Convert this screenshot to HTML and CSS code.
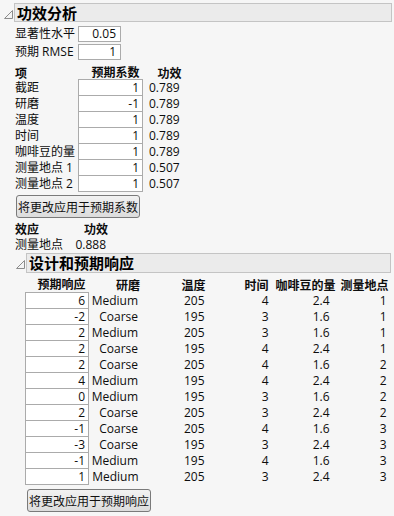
FILE: index.html
```html
<!DOCTYPE html>
<html>
<head>
<meta charset="utf-8">
<link rel="stylesheet" href="styles.css">
</head>
<body>
<div class="outline outline-1">
  <svg class="tri" width="9" height="9" viewBox="0 0 9 9"><polygon points="8.5,0.5 8.5,8.5 0.5,8.5" fill="#f4f4f4" stroke="#8c8c8c" stroke-width="1"/></svg>
  <div class="bar">功效分析</div>
</div>
<div class="sec1">
  <div class="param"><span class="plabel">显著性水平</span><span class="box pbox">0.05</span></div>
  <div class="param"><span class="plabel">预期 RMSE</span><span class="box pbox">1</span></div>

  <table class="t1">
    <tr class="hdr"><th class="c-lab">项</th><th class="c-box">预期系数</th><th class="c-pow">功效</th></tr>
    <tr><td class="c-lab">截距</td><td class="c-box cell">1</td><td class="c-pow">0.789</td></tr>
    <tr><td class="c-lab">研磨</td><td class="c-box cell">-1</td><td class="c-pow">0.789</td></tr>
    <tr><td class="c-lab">温度</td><td class="c-box cell">1</td><td class="c-pow">0.789</td></tr>
    <tr><td class="c-lab">时间</td><td class="c-box cell">1</td><td class="c-pow">0.789</td></tr>
    <tr><td class="c-lab">咖啡豆的量</td><td class="c-box cell">1</td><td class="c-pow">0.789</td></tr>
    <tr><td class="c-lab">测量地点 1</td><td class="c-box cell">1</td><td class="c-pow">0.507</td></tr>
    <tr><td class="c-lab">测量地点 2</td><td class="c-box cell">1</td><td class="c-pow">0.507</td></tr>
  </table>

  <button class="btn btn1">将更改应用于预期系数</button>

  <table class="t-eff">
    <tr class="hdr"><th class="e-lab">效应</th><th class="e-pow">功效</th></tr>
    <tr><td class="e-lab">测量地点</td><td class="e-pow">0.888</td></tr>
  </table>
</div>

<div class="outline outline-2">
  <svg class="tri" width="9" height="9" viewBox="0 0 9 9"><polygon points="8.5,0.5 8.5,8.5 0.5,8.5" fill="#f4f4f4" stroke="#8c8c8c" stroke-width="1"/></svg>
  <div class="bar">设计和预期响应</div>
</div>
<div class="sec2">
  <table class="t2">
    <tr class="hdr"><th class="d1">预期响应</th><th class="d2">研磨</th><th class="d3">温度</th><th class="d4">时间</th><th class="d5">咖啡豆的量</th><th class="d6">测量地点</th></tr>
    <tr><td class="d1 cell">6</td><td class="d2">Medium</td><td class="d3">205</td><td class="d4">4</td><td class="d5">2.4</td><td class="d6">1</td></tr>
    <tr><td class="d1 cell">-2</td><td class="d2">Coarse</td><td class="d3">195</td><td class="d4">3</td><td class="d5">1.6</td><td class="d6">1</td></tr>
    <tr><td class="d1 cell">2</td><td class="d2">Medium</td><td class="d3">205</td><td class="d4">3</td><td class="d5">1.6</td><td class="d6">1</td></tr>
    <tr><td class="d1 cell">2</td><td class="d2">Coarse</td><td class="d3">195</td><td class="d4">4</td><td class="d5">2.4</td><td class="d6">1</td></tr>
    <tr><td class="d1 cell">2</td><td class="d2">Coarse</td><td class="d3">205</td><td class="d4">4</td><td class="d5">1.6</td><td class="d6">2</td></tr>
    <tr><td class="d1 cell">4</td><td class="d2">Medium</td><td class="d3">195</td><td class="d4">4</td><td class="d5">2.4</td><td class="d6">2</td></tr>
    <tr><td class="d1 cell">0</td><td class="d2">Medium</td><td class="d3">195</td><td class="d4">3</td><td class="d5">1.6</td><td class="d6">2</td></tr>
    <tr><td class="d1 cell">2</td><td class="d2">Coarse</td><td class="d3">205</td><td class="d4">3</td><td class="d5">2.4</td><td class="d6">2</td></tr>
    <tr><td class="d1 cell">-1</td><td class="d2">Coarse</td><td class="d3">205</td><td class="d4">4</td><td class="d5">1.6</td><td class="d6">3</td></tr>
    <tr><td class="d1 cell">-3</td><td class="d2">Coarse</td><td class="d3">195</td><td class="d4">3</td><td class="d5">2.4</td><td class="d6">3</td></tr>
    <tr><td class="d1 cell">-1</td><td class="d2">Medium</td><td class="d3">195</td><td class="d4">4</td><td class="d5">1.6</td><td class="d6">3</td></tr>
    <tr><td class="d1 cell">1</td><td class="d2">Medium</td><td class="d3">205</td><td class="d4">3</td><td class="d5">2.4</td><td class="d6">3</td></tr>
  </table>
  <button class="btn btn2">将更改应用于预期响应</button>
</div>
</body>
</html>
```

FILE: styles.css
```css
html, body {
  margin: 0;
  padding: 0;
  background: #f6f6f6;
}
body {
  font-family: "Open Sans", "Noto Sans CJK SC", sans-serif;
  font-size: 12px;
  line-height: 16px;
  color: #0d0d0d;
  width: 394px;
  height: 516px;
  overflow: hidden;
}

/* outline headers */
.outline {
  display: flex;
  align-items: center;
}
.outline-1 {
  padding: 3px 2px 0 4px;
}
.outline-2 {
  padding: 0 3px 0 16px;
}
.tri {
  display: block;
  flex: none;
  margin-right: 1px;
  margin-top: 3px;
}
.bar {
  flex: 1;
  box-sizing: border-box;
  height: 19px;
  border: 1px solid #c4c4c4;
  background: #ebebeb;
  font-family: "Noto Sans CJK SC", sans-serif;
  font-weight: bold;
  font-size: 15px;
  line-height: 17px;
  padding-left: 2px;
  color: #000;
}
.outline-2 .bar {
  height: 20px;
  line-height: 18px;
}

/* section 1 */
.sec1 {
  padding-left: 15px;
}
.param {
  display: flex;
  align-items: center;
  height: 16px;
  margin-top: 2px;
}
.param:first-child {
  margin-top: 4px;
}
.plabel {
  width: 63px;
  flex: none;
  white-space: nowrap;
}
.box {
  box-sizing: border-box;
  background: #fff;
  border: 1px solid #ababab;
}
.pbox {
  display: block;
  width: 43px;
  height: 16px;
  line-height: 14px;
  text-align: right;
  padding-right: 4px;
}

table {
  border-collapse: collapse;
  border-spacing: 0;
}
th, td {
  padding: 0;
  font-size: 12px;
  white-space: nowrap;
}
th {
  font-family: "Noto Sans CJK SC", sans-serif;
  font-weight: bold;
  text-align: left;
}
td {
  height: 15px;
  line-height: 15px;
}
.hdr th {
  height: 18px;
  vertical-align: bottom;
  line-height: 17px;
}
.t1 .hdr th {
  line-height: 14px;
}
.cell {
  background: #fff;
  border: 1px solid #ababab;
  text-align: right;
}

.t1 {
  margin-top: 1px;
}
.t1 .c-lab {
  width: 63px;
}
.t1 .c-box {
  width: 60px;
  text-align: right;
  padding-right: 3px;
}
.t1 .c-pow {
  padding-left: 6px;
}
.t1 th.c-pow {
  padding-left: 15px;
}

.btn {
  display: block;
  box-sizing: border-box;
  height: 23px;
  padding: 0 1px;
  border: 1px solid #7a7a7a;
  border-radius: 3px;
  background: linear-gradient(#f2f2f2, #dcdcdc);
  font-family: "Noto Sans CJK SC", sans-serif;
  font-size: 12px;
  line-height: 20px;
  color: #111;
  white-space: nowrap;
}
.btn1 {
  margin: 3px 0 0 1px;
}

.t-eff {
  margin-top: 2px;
}
.t-eff .hdr th {
  height: 17px;
  line-height: 16px;
}
.t-eff td {
  height: 16px;
  line-height: 16px;
}
.e-lab {
  width: 55px;
}
.t-eff .e-pow {
  width: 36px;
  text-align: right;
  padding-right: 0;
}
.t-eff th.e-pow {
  padding-left: 0;
  text-align: right;
}
.t-eff td.e-pow {
  padding-right: 2px;
}

/* section 2 */
.sec2 {
  padding-left: 25px;
}
.t2 {
  margin-top: 2px;
}
.t2 .hdr th {
  height: 17px;
  line-height: 16px;
  text-align: right;
}
.t2 th, .t2 td {
  text-align: right;
}
.d1 { width: 59px; padding-right: 3px; }
.d2 { width: 51px; padding-right: 2px; }
.d3 { width: 62px; padding-right: 2px; }
.d4 { width: 61px; padding-right: 2px; }
.d5 { width: 65px; padding-right: 2px; }
.d6 { width: 51px; padding-right: 2px; }
.t2 td.d2 { width: 49px; padding-right: 4px; }
.t2 td.d3 { width: 62px; padding-right: 3px; }
.t2 td.d5 { width: 59px; padding-right: 8px; }
.t2 td.d6 { width: 49px; padding-right: 4px; }

.btn2 {
  margin: 4px 0 0 2px;
}
```
